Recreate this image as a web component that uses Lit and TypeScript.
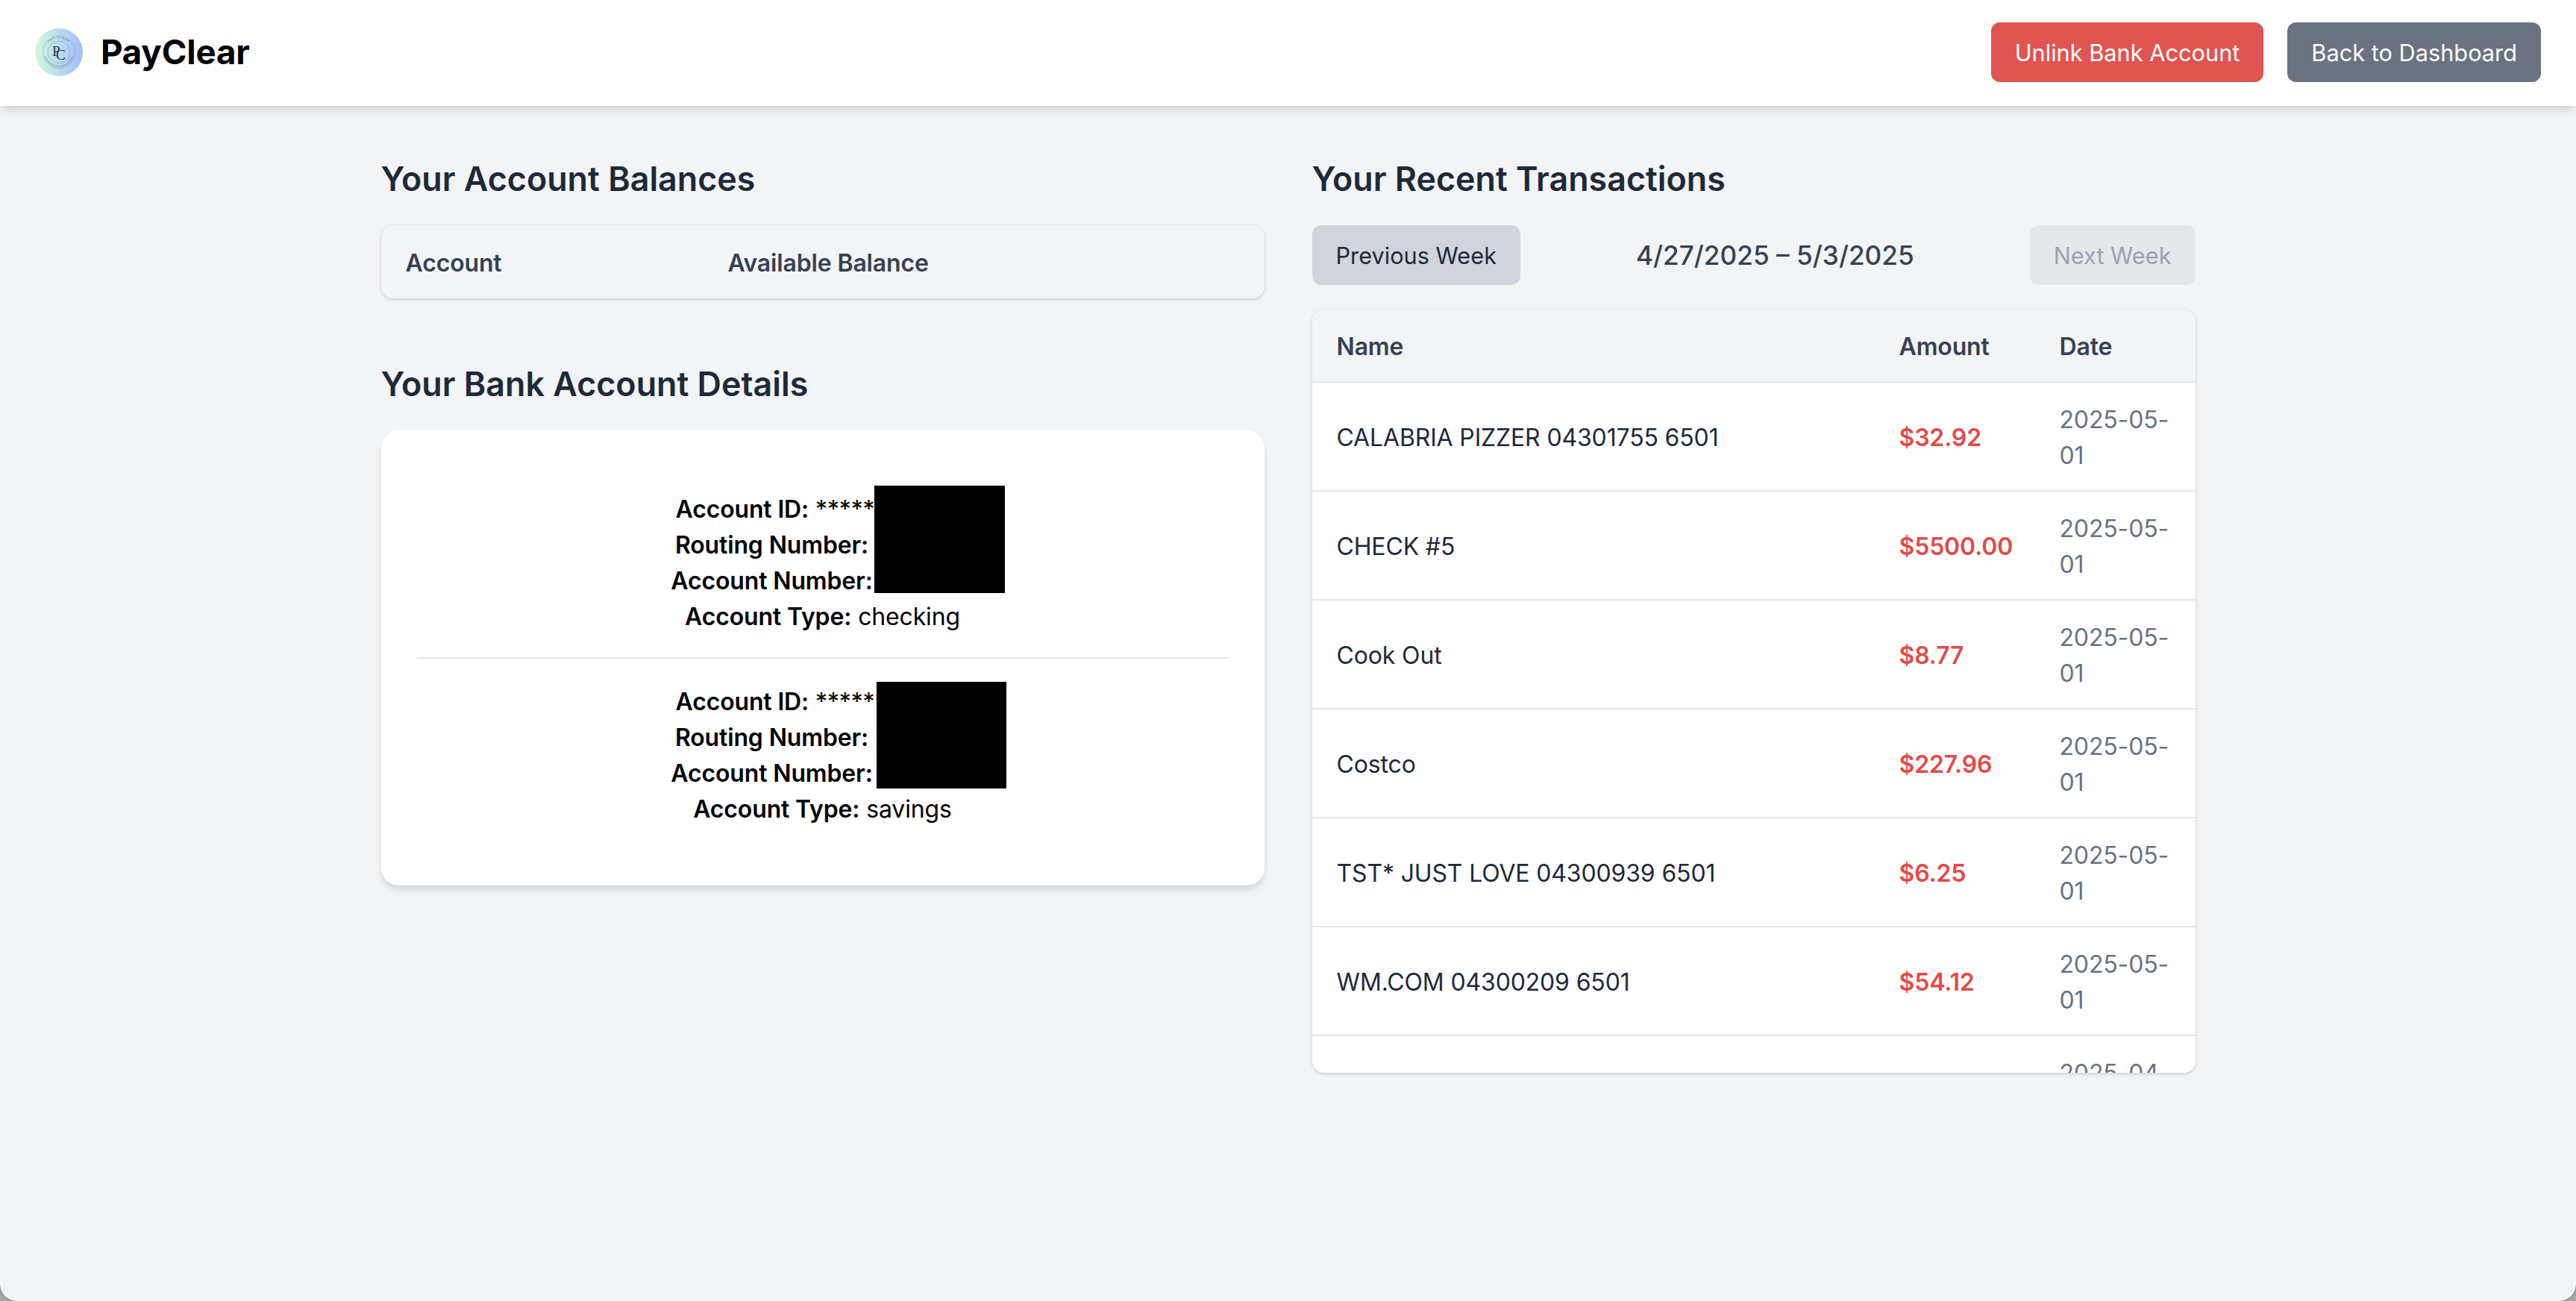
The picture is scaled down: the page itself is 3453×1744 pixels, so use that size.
import { LitElement, html, css } from 'lit';
import { customElement } from 'lit/decorators.js';

const transactions = [
  { name: 'CALABRIA PIZZER 04301755 6501', amount: '$32.92', date: '2025-05-01' },
  { name: 'CHECK #5', amount: '$5500.00', date: '2025-05-01' },
  { name: 'Cook Out', amount: '$8.77', date: '2025-05-01' },
  { name: 'Costco', amount: '$227.96', date: '2025-05-01' },
  { name: 'TST* JUST LOVE 04300939 6501', amount: '$6.25', date: '2025-05-01' },
  { name: 'WM.COM 04300209 6501', amount: '$54.12', date: '2025-05-01' },
  { name: '', amount: '', date: '2025-04-30' },
];

const accounts = [
  { type: 'checking', id: '*************', mask: 'mask-a' },
  { type: 'savings', id: '*************', mask: 'mask-b' },
];

@customElement('app-root')
export class AppRoot extends LitElement {
  static styles = css`
    :host {
      display: block;
      height: 100vh;
      overflow: hidden;
      background: #a6a6a6;
      font-family: Inter, 'Liberation Sans', sans-serif;
      font-size: 32px;
      line-height: 48px;
      letter-spacing: -0.15px;
    }
    * { box-sizing: border-box; }
    .page {
      height: 100%;
      background: #f3f4f6;
      border-radius: 0 0 22px 22px;
      box-shadow: 0 0 2px #222;
      overflow: hidden;
    }
    header {
      height: 142px;
      padding: 30px 47px 32px;
      display: flex;
      align-items: center;
      justify-content: space-between;
      background: #fff;
      box-shadow: 0 8px 12px -2px rgba(0, 0, 0, 0.1), 0 4px 8px -4px rgba(0, 0, 0, 0.1);
      position: relative;
    }
    .brand {
      display: flex;
      align-items: center;
      gap: 24px;
      font-size: 45.6px;
      font-weight: 700;
      color: #000;
    }
    .brand svg { display: block; width: 64px; height: 64px; }
    .actions { display: flex; gap: 32px; }
    button {
      height: 80px;
      padding: 2px 32px 0;
      border: 0;
      border-radius: 12px;
      font: inherit;
      font-size: 30.72px;
      letter-spacing: 0;
      white-space: nowrap;
    }
    .danger { background: #e05451; color: #fff; }
    .muted { background: #6b7280; color: #fff; }
    .prev { background: #d1d5db; color: #1f2937; }
    .next { background: #e5e7eb; color: #9ca3af; }
    main {
      width: 2432px;
      margin: 0 auto;
      padding-top: 64px;
      display: grid;
      grid-template-columns: 1184px 1184px;
      gap: 64px;
      align-items: start;
    }
    h2 {
      margin: 0 0 30px;
      padding-top: 2px;
      font-size: 44.8px;
      line-height: 64px;
      font-weight: 600;
      letter-spacing: 0;
      color: #1f2937;
    }
    .details-title { margin-top: 81px; }
    .table-card {
      border-radius: 16px;
      overflow: hidden;
      box-shadow: 0 2px 5px rgba(0, 0, 0, 0.13), 0 0 3px rgba(0, 0, 0, 0.07);
    }
    .scroller { height: 1023px; background: #fff; }
    table { width: 100%; border-collapse: collapse; table-layout: fixed; }
    th {
      padding: 26px 33px 22px;
      text-align: left;
      font-weight: 600;
      color: #374151;
      background: #f3f4f6;
      border-bottom: 2px solid #e5e7eb;
    }
    .balances th { border-bottom: 0; height: 98px; }
    .balances .col-account { width: 432px; }
    td {
      padding: 26px 33px 22px;
      color: #1f2937;
      background: #fff;
      border-bottom: 2px solid #e5e7eb;
    }
    .col-amount { width: 215px; }
    .col-date { width: 215px; }
    .amount { color: #e14c4a; font-weight: 600; }
    .date { color: #6b7280; padding-right: 20px; }
    .details {
      padding: 48px;
      background: #fff;
      border-radius: 24px;
      box-shadow: 0 8px 12px -2px rgba(0, 0, 0, 0.1), 0 4px 8px -4px rgba(0, 0, 0, 0.1);
      text-align: center;
      color: #000;
    }
    .account { position: relative; padding: 34px 0 30px; }
    .account + .account { border-top: 2px solid #e5e7eb; }
    .account b { font-weight: 600; }
    .redact { position: absolute; background: #000; }
    .mask-a { left: 613px; top: 26px; width: 175px; height: 144px; }
    .mask-b { left: 616px; top: 31px; width: 174px; height: 143px; }
    .week {
      display: flex;
      align-items: center;
      justify-content: space-between;
      margin-bottom: 33px;
    }
    .range { font-size: 35.2px; font-weight: 500; letter-spacing: 0; color: #374151; }
  `;

  private logo() {
    return html`<svg viewBox="0 0 64 64" role="img" aria-label="PayClear logo">
      <defs>
        <linearGradient id="logo-fill" x1="0" x2="1" y1="0" y2="0">
          <stop offset="0" stop-color="#d0fadf" />
          <stop offset="1" stop-color="#a2bdfa" />
        </linearGradient>
        <path id="logo-top" d="M13.5 32a18.5 18.5 0 0 1 37 0" />
      </defs>
      <circle cx="32" cy="32" r="32" fill="url(#logo-fill)" />
      <g fill="none" stroke="#4b5a68" stroke-opacity="0.5" stroke-width="0.5">
        <circle cx="32" cy="32" r="21.5" />
        <circle cx="32" cy="32" r="15" />
        <path d="M14 38a19 19 0 0 0 36 0" stroke-width="2" stroke-dasharray="1.3 1.1" />
      </g>
      <text font-size="3.6" font-weight="700" fill="#3f4d5a" fill-opacity="0.6" letter-spacing="1">
        <textPath href="#logo-top" startOffset="50%" text-anchor="middle">PAY CLEAR</textPath>
      </text>
      <g font-family="'Liberation Serif', serif" fill="#2d3944" font-weight="400">
        <text x="23" y="37" font-size="19">P</text>
        <text x="28" y="42" font-size="19">C</text>
      </g>
    </svg>`;
  }

  render() {
    return html`
      <div class="page">
        <header>
          <div class="brand">${this.logo()}<span>PayClear</span></div>
          <div class="actions">
            <button class="danger">Unlink Bank Account</button>
            <button class="muted">Back to Dashboard</button>
          </div>
        </header>
        <main>
          <section>
            <h2>Your Account Balances</h2>
            <div class="table-card balances">
              <table>
                <thead>
                  <tr><th class="col-account">Account</th><th>Available Balance</th></tr>
                </thead>
              </table>
            </div>
            <h2 class="details-title">Your Bank Account Details</h2>
            <div class="details">
              ${accounts.map(
                (a) => html`<div class="account">
                  <div><b>Account ID:</b> ${a.id}</div>
                  <div><b>Routing Number:</b> ********</div>
                  <div><b>Account Number:</b> ********</div>
                  <div><b>Account Type:</b> ${a.type}</div>
                  <div class="redact ${a.mask}"></div>
                </div>`
              )}
            </div>
          </section>
          <section>
            <h2>Your Recent Transactions</h2>
            <div class="week">
              <button class="prev">Previous Week</button>
              <span class="range">4/27/2025 – 5/3/2025</span>
              <button class="next">Next Week</button>
            </div>
            <div class="table-card scroller">
              <table>
                <thead>
                  <tr>
                    <th>Name</th>
                    <th class="col-amount">Amount</th>
                    <th class="col-date">Date</th>
                  </tr>
                </thead>
                <tbody>
                  ${transactions.map(
                    (t) => html`<tr>
                      <td>${t.name}</td>
                      <td class="amount">${t.amount}</td>
                      <td class="date">${t.date}</td>
                    </tr>`
                  )}
                </tbody>
              </table>
            </div>
          </section>
        </main>
      </div>
    `;
  }
}
